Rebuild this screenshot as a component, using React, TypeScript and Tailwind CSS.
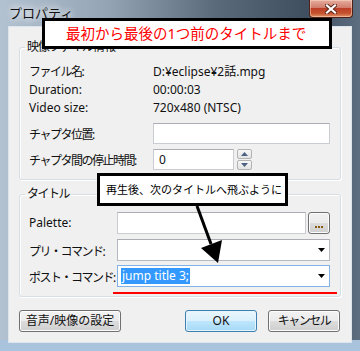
import React from "react";

const btn =
  "h-[22px] rounded-[3px] border border-[#707070] bg-[linear-gradient(180deg,#f2f2f2_0%,#ebebeb_50%,#dddddd_50%,#cfcfcf_100%)] shadow-[inset_0_0_0_1px_#fcfcfc] flex items-center justify-center text-[12px] text-[#111]";

function Combo({ focused, children }: { focused?: boolean; children?: React.ReactNode }) {
  return (
    <div
      className={
        "h-[22px] flex-1 bg-white border flex items-center pl-[3px] pr-[4px] " +
        (focused ? "border-[#7eb4ea]" : "border-[#b5b9c2] border-t-[#abadb3]")
      }
    >
      <div className="flex-1 flex items-center overflow-hidden">{children}</div>
      <svg width="7" height="4" viewBox="0 0 7 4">
        <polygon points="0,0 7,0 3.5,4" fill="#000" />
      </svg>
    </div>
  );
}

export default function App() {
  return (
    <div className="relative w-[360px] h-[351px] overflow-hidden flex flex-col font-['Noto_Sans','Noto_Sans_CJK_JP',sans-serif] text-[#111] bg-[linear-gradient(180deg,transparent_0%,transparent_97%,#a9c3dc_97%),linear-gradient(90deg,#b3c2d1_0%,#95a4b4_30%,#5a6a7b_60%,#404f60_85%,#5d6e80_100%)]">
      {/* title bar */}
      <div className="h-[26px] flex items-start shrink-0">
        <div className="pl-[9px] pt-[5px] text-[13px] leading-[16px] text-[#111] [text-shadow:0_0_6px_#fff,0_0_10px_#fff]">
          プロパティ
        </div>
        <div className="ml-auto mr-[7px] w-[44px] h-[18px] rounded-b-[4px] border border-t-0 border-[#4d2118] bg-[linear-gradient(180deg,#e6ad9f_0%,#d27d6c_45%,#bd3f27_50%,#c4532f_78%,#e2956a_100%)] shadow-[inset_0_0_0_1px_rgba(255,220,200,0.5)] flex items-center justify-center">
          <svg width="12" height="10" viewBox="0 0 12 10">
            <path d="M2 1.5 L10 8.5 M10 1.5 L2 8.5" stroke="#5a2418" strokeWidth="4" strokeLinecap="square" />
            <path d="M2 1.5 L10 8.5 M10 1.5 L2 8.5" stroke="#fff" strokeWidth="2.2" strokeLinecap="square" />
          </svg>
        </div>
      </div>

      {/* client */}
      <div className="flex-1 px-[8px] pb-[8px] flex">
        <div className="flex-1 bg-[#f0f0f0] border border-[#dde5ec] pl-[10px] pr-[10px] pt-[13px] flex flex-col">
          {/* group 1 */}
          <fieldset className="border border-[#d5dfe5] rounded-[3px] pl-[9px] pr-[10px] pb-[9px] shadow-[inset_1px_1px_0_#fff,1px_1px_0_#fff]">
            <legend className="ml-[-4px] px-[2px] text-[12px] leading-[14px] tracking-[-1px]">映像ファイル情報</legend>
            <div className="mt-[9px] flex flex-col text-[12px]">
              <div className="h-[18px] flex items-center">
                <div className="w-[124px] tracking-[-1.5px]">ファイル名:</div>
                <div>D:¥eclipse¥2話.mpg</div>
              </div>
              <div className="h-[18px] flex items-center">
                <div className="w-[124px]">Duration:</div>
                <div>00:00:03</div>
              </div>
              <div className="h-[18px] flex items-center">
                <div className="w-[124px]">Video size:</div>
                <div>720x480 (NTSC)</div>
              </div>
              <div className="mt-[6px] h-[21px] flex items-center">
                <div className="w-[124px] tracking-[-1.5px] pt-[3px]">チャプタ位置:</div>
                <div className="h-[21px] flex-1 bg-white border border-[#c9ccd3] border-t-[#abadb3]" />
              </div>
              <div className="mt-[5px] h-[21px] flex items-center">
                <div className="w-[124px] tracking-[-1.5px] pt-[3px]">チャプタ間の停止時間:</div>
                <div className="h-[21px] w-[81px] bg-white border border-[#c9ccd3] border-t-[#abadb3] flex items-center pl-[5px]">
                  0
                </div>
                <div className="ml-[3px] flex flex-col gap-[1px]">
                  {[0, 1].map((i) => (
                    <div
                      key={i}
                      className="w-[15px] h-[10px] rounded-[2px] border border-[#b3b3b3] bg-[linear-gradient(180deg,#f7f7f7,#e3e3e3)] flex items-center justify-center"
                    >
                      <svg width="7" height="4" viewBox="0 0 7 4">
                        {i === 0 ? (
                          <polygon points="0,4 7,4 3.5,0" fill="#4d6185" />
                        ) : (
                          <polygon points="0,0 7,0 3.5,4" fill="#4d6185" />
                        )}
                      </svg>
                    </div>
                  ))}
                </div>
              </div>
            </div>
          </fieldset>

          {/* group 2 */}
          <fieldset className="mt-[7px] border border-[#d5dfe5] rounded-[3px] pl-[9px] pr-[10px] pb-[9px] shadow-[inset_1px_1px_0_#fff,1px_1px_0_#fff]">
            <legend className="ml-[-4px] px-[2px] text-[12px] leading-[14px] tracking-[-1.5px]">タイトル</legend>
            <div className="mt-[11px] flex flex-col text-[12px]">
              <div className="h-[22px] flex items-center">
                <div className="w-[88px]">Palette:</div>
                <div className="h-[22px] w-[189px] bg-white border border-[#c9ccd3] border-t-[#abadb3]" />
                <div className="ml-[2px] w-[22px] h-[22px] rounded-[3px] border border-[#707070] bg-[linear-gradient(180deg,#f2f2f2_0%,#ebebeb_50%,#dddddd_50%,#cfcfcf_100%)] shadow-[inset_0_0_0_1px_#fcfcfc] flex items-end justify-center pb-[5px] gap-[1px]">
                  <span className="w-[2px] h-[2px] bg-[#8a5a10]" />
                  <span className="w-[2px] h-[2px] bg-[#8a5a10]" />
                  <span className="w-[2px] h-[2px] bg-[#8a5a10]" />
                </div>
              </div>
              <div className="mt-[5px] h-[22px] flex items-center">
                <div className="w-[88px] tracking-[-1.5px] pt-[3px]">プリ・コマンド:</div>
                <Combo />
              </div>
              <div className="mt-[4px] h-[22px] flex items-center">
                <div className="w-[88px] tracking-[-1.5px] pt-[3px]">ポスト・コマンド:</div>
                <Combo focused>
                  <span className="bg-[#3399ff] text-white leading-[16px] px-[1px]">jump title 3;</span>
                </Combo>
              </div>
            </div>
          </fieldset>

          {/* buttons */}
          <div className="mt-[13px] flex items-center pr-[1px]">
            <div className={btn + " w-[102px]"}>音声/映像の設定</div>
            <div className="ml-auto flex gap-[11px]">
              <div className="w-[72px] h-[22px] rounded-[3px] border border-[#3c7fb1] bg-[linear-gradient(180deg,#eaf6fd_0%,#d9f0fc_50%,#bee6fd_50%,#a7d9f5_100%)] shadow-[inset_0_0_0_1px_#e8f4fb] flex items-center justify-center text-[12px]">
                OK
              </div>
              <div className={btn + " w-[72px] tracking-[-1.5px]"}>キャンセル</div>
            </div>
          </div>
        </div>
      </div>

      {/* annotations */}
      <div className="absolute left-[42px] top-[18px] w-[290px] h-[31px] bg-white border-[3px] border-black flex items-center pl-[21px] text-[14.5px] text-[#ff0000] leading-none">
        最初から最後の1つ前のタイトルまで
      </div>
      <div className="absolute left-[97px] top-[173px] w-[191px] h-[33px] bg-white border-[3px] border-black flex items-center pl-[6px] text-[11px] text-black leading-none">
        再生後、次のタイトルへ飛ぶように
      </div>
      <div className="absolute left-[113px] top-[292px] w-[224px] h-[2px] bg-[#ff0000]" />
      <svg className="absolute left-0 top-0 pointer-events-none" width="360" height="351">
        <line x1="197" y1="206" x2="211" y2="244" stroke="#000" strokeWidth="3" />
        <polygon points="201,248 222,240 218,263" fill="#000" />
      </svg>
    </div>
  );
}
